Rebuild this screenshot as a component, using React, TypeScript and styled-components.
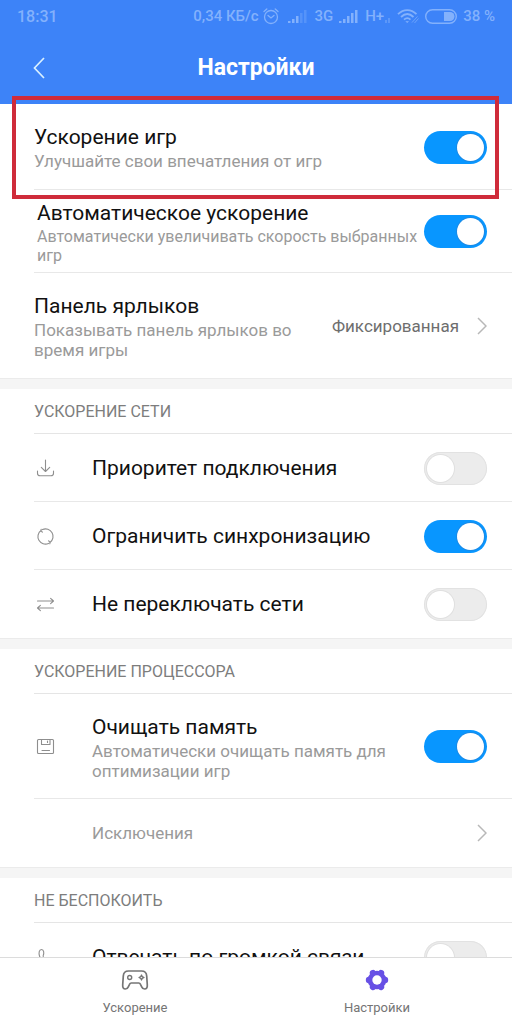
import React, { useState } from "react";
import styled, { createGlobalStyle } from "styled-components";

const GlobalStyle = createGlobalStyle`
  *, *::before, *::after { box-sizing: border-box; }
  body {
    margin: 0;
    background: #fff;
    font-family: Roboto, "Noto Sans", "Liberation Sans", sans-serif;
    color: #111;
  }
  button, input { font: inherit; color: inherit; }
`;

const Screen = styled.div`
  display: flex;
  flex-direction: column;
  height: 100vh;
  overflow: hidden;
`;

const Header = styled.header`
  flex: none;
  background: #3d83f8;
`;

const StatusBar = styled.div`
  display: flex;
  align-items: center;
  justify-content: space-between;
  height: 32px;
  padding: 0 17px;
  color: #83b1fc;
  font-size: 16px;
  font-weight: 500;
`;

const StatusGroup = styled.div`
  display: flex;
  align-items: center;
  gap: 6px;
  font-size: 15px;
  white-space: nowrap;

  svg { display: block; }
`;

const Network = styled.span`
  display: flex;
  align-items: center;
  gap: 1px;

  &:first-child { padding-right: 3px; }
`;

const TitleBar = styled.div`
  display: grid;
  grid-template-columns: 48px 1fr 48px;
  align-items: center;
  height: 72px;
  padding: 0 15px;
`;

const BackButton = styled.button`
  display: flex;
  align-items: center;
  justify-content: center;
  height: 48px;
  padding: 0;
  border: 0;
  background: none;
`;

const Title = styled.h1`
  margin: 0;
  color: #fff;
  font-size: 23px;
  line-height: 28px;
  font-weight: 700;
  text-align: center;
`;

/* The clip margin lets the first row's frame overlap the header. */
const Content = styled.main`
  flex: 1;
  min-height: 0;
  overflow: clip;
  overflow-clip-margin: 12px;
`;

const Section = styled.section`
  & + &::before {
    content: "";
    display: block;
    height: 11px;
    border-top: 1px solid #ebebeb;
    background: #f5f5f5;
  }
`;

const SectionTitle = styled.h2`
  margin: 0 0 0 34px;
  padding: 13px 0 11px;
  border-bottom: 1px solid #e5e5e5;
  color: #7d7d7d;
  font-size: 16px;
  line-height: 20px;
  font-weight: 400;
`;

const Row = styled.div<{ $height: number; $inset?: boolean }>`
  position: relative;
  display: flex;
  align-items: center;
  min-height: ${(p) => p.$height}px;
  padding: 0 25px 0 ${(p) => (p.$inset ? 37 : 34)}px;

  &:not(:last-child)::after {
    content: "";
    position: absolute;
    left: 34px;
    right: 0;
    bottom: 0;
    height: 1px;
    background: #e8e8e8;
  }
`;

const LinkRow = styled(Row).attrs({ as: "button", type: "button" })`
  width: 100%;
  border: 0;
  background: none;
  text-align: left;
  font-size: 17px;
`;

const Highlight = styled.div`
  position: absolute;
  inset: -8px 13px -9px 12px;
  z-index: 1;
  border: 4px solid #cf2b3a;
  pointer-events: none;
`;

const IconSlot = styled.span`
  flex: none;
  display: flex;
  width: 58px;
  padding-left: 2px;
`;

const RowText = styled.span`
  flex: 1;
  min-width: 0;
  display: flex;
  flex-direction: column;
`;

const RowLabel = styled.label`
  font-size: 21px;
  line-height: 28px;
`;

const Hint = styled.span<{ $small?: boolean }>`
  color: #9a9a9a;
  font-size: ${(p) => (p.$small ? 16 : 17)}px;
  line-height: ${(p) => (p.$small ? 19 : 20)}px;
`;

const Value = styled.span`
  flex: none;
  margin: 0 18px 0 24px;
  color: #6e6e6e;
`;

const Switch = styled.input.attrs({ type: "checkbox", role: "switch" })`
  appearance: none;
  flex: none;
  display: flex;
  align-items: center;
  width: 63px;
  height: 33px;
  margin: 0;
  padding: 0 3px;
  border-radius: 17px;
  background: #ececec;
  box-shadow: inset 0 0 0 1px #e2e2e2;

  &::before {
    content: "";
    width: 27px;
    height: 27px;
    border-radius: 50%;
    background: #fff;
    box-shadow: 0 0 0 1px #e0e0e0;
  }

  &:checked {
    justify-content: flex-end;
    background: #0896ff;
    box-shadow: none;
  }

  &:checked::before { box-shadow: 0 0 0 1px #1a8ae6; }
`;

const TabBar = styled.nav`
  position: relative;
  z-index: 2;
  flex: none;
  display: flex;
  height: 67px;
  padding: 0 14px;
  border-top: 1px solid #dcdcdc;
  background: #fff;
`;

const Tab = styled.button`
  flex: 1;
  display: flex;
  flex-direction: column;
  align-items: center;
  gap: 6px;
  padding: 10px 0 0;
  border: 0;
  background: none;
  color: #757575;
  font-size: 13px;
  line-height: 20px;
`;

const Chevron = () => (
  <svg width="10" height="18" viewBox="0 0 10 18" fill="none" stroke="#b8b8b8" strokeWidth="1.5" aria-hidden="true">
    <path d="M1 1l8 8-8 8" />
  </svg>
);

const LineIcon = ({ children }: { children: React.ReactNode }) => (
  <svg width="19" height="19" viewBox="0 0 19 19" fill="none" stroke="#8e8e8e" strokeWidth="1.1" strokeLinecap="round" strokeLinejoin="round" aria-hidden="true">
    {children}
  </svg>
);

const DownloadIcon = () => (
  <LineIcon>
    <path d="M9.5 1v11.500M5.3 8.400l4.200 4.100 4.200-4.100M1.500 12v2.200c0 1.600.9 2.600 2.600 2.600h10.800c1.700 0 2.600-1 2.600-2.600V12" />
  </LineIcon>
);

const SyncIcon = () => (
  <LineIcon>
    <path d="M6.500 2.600A7.500 7.500 0 0 1 14 15.500M14 15.500l-1.300-1.700M14 15.500l-.2 1.300" />
    <path d="M12.500 16.400A7.500 7.500 0 0 1 5 3.500M5 3.500l1.300 1.700M5 3.500l.2-1.300" />
  </LineIcon>
);

const SwapIcon = () => (
  <LineIcon>
    <path d="M1.500 6h16M14.600 3.300L17.500 6l-2.900 2.700M17.500 13h-16M4.400 10.300L1.500 13l2.900 2.700" />
  </LineIcon>
);

const DiskIcon = () => (
  <LineIcon>
    <rect x="1.500" y="2.500" width="16" height="14" rx="1" />
    <path d="M5.500 2.500v5h8.500v-5M11.500 4v1.500M6 13.500h7.500" />
  </LineIcon>
);

const PhoneIcon = () => (
  <LineIcon>
    <path d="M3.500 8C2.600 5.200 3 1.500 5.500 1.500S8.200 5 7.200 7.500c-.8 2 3 5 4.800 4.300 2.500-1 5 .2 5.500 2.200.5 2.500-4 4-7 2.500C7 14.800 4.500 11.500 3.500 8z" />
  </LineIcon>
);

const AlarmIcon = () => (
  <svg width="16" height="17" viewBox="0 0 16 17" fill="none" stroke="currentColor" strokeWidth="1.3" strokeLinecap="round" aria-hidden="true">
    <circle cx="8" cy="9" r="6.500" />
    <path d="M5 7.500l3 2.500 3-2.500M1 3.500L3.800 1M15 3.500L12.200 1" />
  </svg>
);

const SignalIcon = ({ level }: { level: number }) => (
  <svg width="20" height="14" viewBox="0 0 20 14" fill="currentColor" aria-hidden="true">
    {[2, 4, 7, 10, 13].map((h, i) => (
      <rect key={h} x={i * 4} y={14 - h} width="2.500" height={h} opacity={i < level ? 1 : 0.35} />
    ))}
  </svg>
);

const MiniSignalIcon = () => (
  <svg width="6" height="13" viewBox="0 0 6 13" fill="currentColor" opacity="0.45" aria-hidden="true">
    <rect x="0" y="10" width="2" height="3" />
    <rect x="3" y="8" width="2" height="5" />
  </svg>
);

const WifiIcon = () => (
  <svg width="22" height="15" viewBox="0 0 22 15" fill="none" stroke="currentColor" strokeWidth="1.800" aria-hidden="true">
    <path d="M1 5.200c5.500-5.500 13-5.500 18.500 0M4 8c4-3.800 8.500-3.800 12.500 0M7 10.700c2.200-2 4.500-2 6.500 0" />
    <path d="M8.300 12.200L10.200 14l1.900-1.800z" fill="currentColor" stroke="none" />
    <path d="M15 13.500l5.500-6M17.500 14l4-4.500" strokeWidth="1" opacity=".7" />
  </svg>
);

const BatteryIcon = () => (
  <svg width="32" height="15" viewBox="0 0 32 15" fill="none" stroke="currentColor" strokeWidth="1.400" aria-hidden="true">
    <rect x=".7" y=".7" width="30.600" height="13.600" rx="6.800" />
    <path d="M19 3h6a4.500 4.500 0 0 1 0 9h-6z" fill="currentColor" stroke="none" />
  </svg>
);

const GamepadIcon = () => (
  <svg width="28" height="24" viewBox="0 0 28 24" fill="none" stroke="#757575" strokeWidth="1.700" strokeLinejoin="round" aria-hidden="true">
    <path d="M7.500 3h13c3.200 0 5 1.800 5.200 5l.6 9c.2 2.600-.9 4-2.600 4-1.500 0-2.400-.8-3-2.200l-1.200-2.500c-.4-.9-.9-1.300-1.800-1.300h-7.400c-.9 0-1.400.4-1.800 1.300l-1.200 2.500c-.6 1.400-1.500 2.200-3 2.200-1.700 0-2.800-1.400-2.600-4l.6-9c.2-3.200 2-5 5.200-5z" />
    <circle cx="8.700" cy="9.500" r="2" strokeWidth="1.400" />
    <path d="M20.500 7l.8 1.700 1.700.8-1.700.8-.8 1.700-.8-1.700-1.700-.8 1.700-.8z" strokeWidth="1.300" />
  </svg>
);

const GearIcon = () => (
  <svg width="24" height="24" viewBox="0 0 24 24" aria-hidden="true">
    <g fill="#6750e5">
      <circle cx="12" cy="12" r="9.300" />
      {[0, 60, 120, 180, 240, 300].map((angle) => (
        <circle key={angle} cx="20" cy="12" r="3.200" transform={`rotate(${angle} 12 12)`} />
      ))}
    </g>
    <circle cx="12" cy="12" r="4.700" fill="#fff" />
  </svg>
);

type ToggleRowProps = {
  id: string;
  label: string;
  hint?: string;
  small?: boolean;
  height: number;
  on?: boolean;
  icon?: React.ReactNode;
  highlighted?: boolean;
};

const ToggleRow = ({ id, label, hint, small, height, on = false, icon, highlighted }: ToggleRowProps) => {
  const [checked, setChecked] = useState(on);
  return (
    <Row $height={height} $inset={small}>
      {icon && <IconSlot>{icon}</IconSlot>}
      <RowText>
        <RowLabel htmlFor={id}>{label}</RowLabel>
        {hint && <Hint $small={small}>{hint}</Hint>}
      </RowText>
      <Switch id={id} checked={checked} onChange={(e) => setChecked(e.target.checked)} />
      {highlighted && <Highlight />}
    </Row>
  );
};

export default function App() {
  return (
    <>
      <GlobalStyle />
      <Screen>
        <Header>
          <StatusBar>
            <span>18:31</span>
            <StatusGroup>
              <Network>
                0,34 КБ/с&nbsp;
                <AlarmIcon />
              </Network>
              <SignalIcon level={3} />
              <span>3G</span>
              <SignalIcon level={5} />
              <Network>
                H+
                <MiniSignalIcon />
              </Network>
              <WifiIcon />
              <BatteryIcon />
              <span>38 %</span>
            </StatusGroup>
          </StatusBar>
          <TitleBar>
            <BackButton type="button" aria-label="Назад">
              <svg width="12" height="22" viewBox="0 0 12 22" fill="none" stroke="#d9f0ff" strokeWidth="1.700" aria-hidden="true">
                <path d="M11 1L1.500 11l9.500 10" />
              </svg>
            </BackButton>
            <Title>Настройки</Title>
          </TitleBar>
        </Header>

        <Content>
          <Section>
            <ToggleRow id="boost" label="Ускорение игр" hint="Улучшайте свои впечатления от игр" height={86} on highlighted />
            <ToggleRow id="auto" label="Автоматическое ускорение" hint="Автоматически увеличивать скорость выбранных игр" height={83} on small />
            <LinkRow $height={105}>
              <RowText>
                <RowLabel as="span">Панель ярлыков</RowLabel>
                <Hint>Показывать панель ярлыков во время игры</Hint>
              </RowText>
              <Value>Фиксированная</Value>
              <Chevron />
            </LinkRow>
          </Section>

          <Section>
            <SectionTitle>УСКОРЕНИЕ СЕТИ</SectionTitle>
            <ToggleRow id="priority" label="Приоритет подключения" height={68} icon={<DownloadIcon />} />
            <ToggleRow id="sync" label="Ограничить синхронизацию" height={68} on icon={<SyncIcon />} />
            <ToggleRow id="switching" label="Не переключать сети" height={68} icon={<SwapIcon />} />
          </Section>

          <Section>
            <SectionTitle>УСКОРЕНИЕ ПРОЦЕССОРА</SectionTitle>
            <ToggleRow id="memory" label="Очищать память" hint="Автоматически очищать память для оптимизации игр" height={105} on icon={<DiskIcon />} />
            <LinkRow $height={68}>
              <IconSlot />
              <RowText>
                <Hint>Исключения</Hint>
              </RowText>
              <Chevron />
            </LinkRow>
          </Section>

          <Section>
            <SectionTitle>НЕ БЕСПОКОИТЬ</SectionTitle>
            <ToggleRow id="speaker" label="Отвечать по громкой связи" height={68} icon={<PhoneIcon />} />
          </Section>
        </Content>

        <TabBar>
          <Tab type="button">
            <GamepadIcon />
            Ускорение
          </Tab>
          <Tab type="button" aria-current="page">
            <GearIcon />
            Настройки
          </Tab>
        </TabBar>
      </Screen>
    </>
  );
}
